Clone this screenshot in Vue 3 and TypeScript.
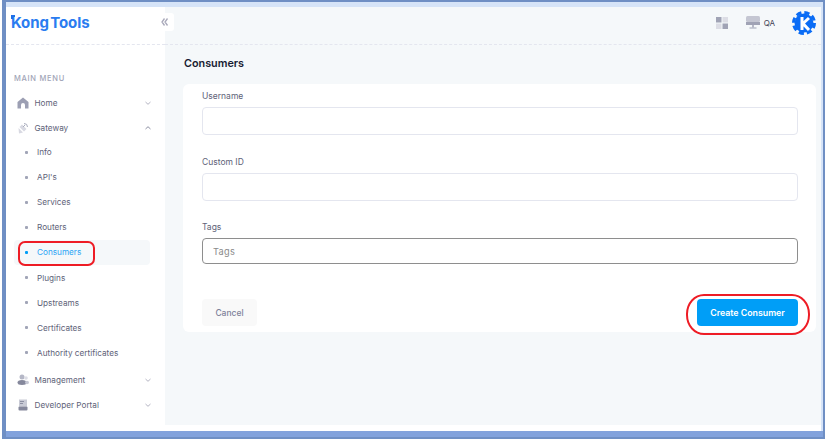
<script setup lang="ts">
const subs = ['Info', "API's", 'Services', 'Routers', 'Consumers', 'Plugins', 'Upstreams', 'Certificates', 'Authority certificates']
</script>

<template>
  <div class="frame">
    <div class="app">
      <aside class="side">
        <div class="brand">
          <span class="logo"><i class="tick"></i>Kong Tools</span>
          <button class="collapse" aria-label="Collapse">
            <svg width="8" height="10" viewBox="0 0 8 10"><path d="M3.500 1.500 1 5l2.500 3.500M6.500 1.500 4 5l2.500 3.500" fill="none" stroke="#a9a9ba" stroke-width="1.300"/></svg>
          </button>
        </div>
        <div class="menu-title">MAIN MENU</div>
        <nav class="menu">
          <div class="row top">
            <svg class="ico" width="12" height="12" viewBox="0 0 12 12"><path d="M6 .5 .5 5v6.500h3.500V8a2 2 0 0 1 4 0v3.500h3.500V5z" fill="#9c9fb3"/></svg>
            <span class="grow">Home</span>
            <svg class="chev" width="8" height="8" viewBox="0 0 8 8"><path d="M1.500 3 4 5.300 6.500 3" fill="none" stroke="#b5b5c3"/></svg>
          </div>
          <div class="row top">
            <svg class="ico" width="12" height="12" viewBox="0 0 12 12"><path d="M1.500 6 6 10.500 2 11.500zM2.500 5 5 2.500l4.500 4.500L7 9.500z" fill="#d8d9e2"/><path d="M7 1.500a3.500 3.500 0 0 1 3.500 3.500M6 5l2-2" fill="none" stroke="#a8abbc"/></svg>
            <span class="grow">Gateway</span>
            <svg class="chev" width="8" height="8" viewBox="0 0 8 8"><path d="M1.500 5 4 2.700 6.500 5" fill="none" stroke="#8d90a3"/></svg>
          </div>
          <div class="subs">
            <div v-for="s in subs" :key="s" class="sub" :class="{ active: s === 'Consumers' }">
              <i class="dot"></i><span>{{ s }}</span>
            </div>
          </div>
          <div class="row top mgmt">
            <svg class="ico" width="12" height="12" viewBox="0 0 12 12"><circle cx="5" cy="3" r="2.500" fill="#b5b7c6"/><circle cx="9" cy="4" r="1.800" fill="#dcdde5"/><ellipse cx="5" cy="8.500" rx="4.500" ry="2.500" fill="#85889c"/><ellipse cx="10" cy="8.500" rx="2" ry="1.800" fill="#c5c7d3"/></svg>
            <span class="grow">Management</span>
            <svg class="chev" width="8" height="8" viewBox="0 0 8 8"><path d="M1.500 3 4 5.300 6.500 3" fill="none" stroke="#b5b5c3"/></svg>
          </div>
          <div class="row top">
            <svg class="ico" width="12" height="12" viewBox="0 0 12 12"><rect x="2" y=".5" width="8" height="7" fill="#c9cbd6"/><rect x="3" y="2" width="4" height="1" fill="#8d90a3"/><rect x="3" y="4" width="3" height="1" fill="#8d90a3"/><rect x="1.500" y="7.500" width="9" height="4" rx="1" fill="#85889c"/></svg>
            <span class="grow">Developer Portal</span>
            <svg class="chev" width="8" height="8" viewBox="0 0 8 8"><path d="M1.500 3 4 5.300 6.500 3" fill="none" stroke="#b5b5c3"/></svg>
          </div>
        </nav>
      </aside>

      <div class="main">
        <header class="head">
          <svg width="12" height="12" viewBox="0 0 12 12"><rect width="5.500" height="5.500" fill="#a0a3b5"/><rect x="6.500" width="5.500" height="5.500" fill="#dcdde5"/><rect y="6.500" width="5.500" height="5.500" fill="#dcdde5"/><rect x="6.500" y="6.500" width="5.500" height="5.500" fill="#a0a3b5"/></svg>
          <span class="env">
            <svg width="14" height="13" viewBox="0 0 14 13"><rect width="14" height="6" rx="1.500" fill="#c4c6d2"/><rect y="6" width="14" height="3" fill="#a0a3b5"/><rect x="6" y="9" width="2" height="2.500" fill="#b5b7c6"/><rect x="3.500" y="11.500" width="7" height="1" fill="#a0a3b5"/></svg>
            <b>QA</b>
          </span>
          <svg class="kong" width="26" height="24" viewBox="0 0 26 24">
            <circle cx="13" cy="12" r="9.500" fill="#0a6cf5"/>
            <circle cx="13" cy="12" r="10.500" fill="none" stroke="#0a6cf5" stroke-width="3" stroke-dasharray="5.250 3"/>
            <path d="M11 6v13M18 7l-6 5.500 6 6.500" fill="none" stroke="#fff" stroke-width="3"/>
          </svg>
        </header>
        <main class="content">
          <h1>Consumers</h1>
          <form class="card" @submit.prevent>
            <label class="field"><span>Username</span><input type="text" /></label>
            <label class="field"><span>Custom ID</span><input type="text" /></label>
            <label class="field tags"><span>Tags</span><input type="text" placeholder="Tags" /></label>
            <div class="actions">
              <button type="button" class="cancel">Cancel</button>
              <button type="submit" class="create">Create Consumer</button>
            </div>
          </form>
        </main>
      </div>
    </div>
    <div class="mark mark-a"></div>
    <div class="mark mark-b"></div>
  </div>
</template>

<style>
html, body { margin: 0; background: #fff; }
</style>

<style scoped>
.frame {
  position: relative;
  box-sizing: border-box;
  width: 827px;
  height: 440px;
  overflow: hidden;
  padding: 7px 6px 0 6px;
  background: #fff;
  font-family: Inter, "Liberation Sans", sans-serif;
  color: #5e6278;
}
.frame::before {
  content: "";
  position: absolute;
  left: 2px; top: 0; right: 2px; bottom: 1px;
  border-style: solid;
  border-color: #6f8fc4;
  border-width: 2px 2px 2px 4px;
  background: #d6e4f8;
  box-sizing: border-box;
}
.frame::after {
  content: "";
  position: absolute;
  left: 6px; right: 4px; bottom: 3px;
  height: 6px;
  background: #82a2dc;
}
.app {
  position: relative;
  z-index: 1;
  display: flex;
  height: 424px;
  background: #fff;
}
.side {
  width: 159px;
  flex: none;
  background: #fff;
}
.brand {
  position: relative;
  height: 37px;
  border-bottom: 1px dashed #e4e6ef;
}
.logo {
  position: absolute;
  left: 5px;
  top: 7px;
  font-size: 15px;
  font-weight: 700;
  letter-spacing: -.1px;
  word-spacing: -2px;
  color: #2a7cf0;
  line-height: 18px;
}
.tick {
  position: absolute;
  left: 0; top: 1px;
  width: 4px; height: 4px;
  border-top: 2px solid #1e6fe8;
  border-left: 2px solid #1e6fe8;
  box-sizing: border-box;
}
.collapse {
  position: absolute;
  right: -9px;
  top: 6px;
  width: 18px;
  height: 18px;
  padding: 0;
  border: 0;
  border-radius: 3px;
  background: #fff;
  display: flex;
  align-items: center;
  justify-content: center;
}
.menu-title {
  margin: 28px 0 0 8px;
  font-size: 7.500px;
  font-weight: 500;
  letter-spacing: .72px;
  color: #a1a5b7;
  line-height: 12px;
}
.menu { margin-top: 5px; font-size: 8.200px; font-weight: 400; }
.row {
  height: 25px;
  display: flex;
  align-items: center;
  padding: 0 13px 0 11px;
}
.ico { flex: none; margin-right: 5.500px; }
.grow { flex: 1; }
.chev { flex: none; }
.subs { display: flex; flex-direction: column; margin-top: -.5px; }
.sub {
  height: 25.100px;
  display: flex;
  align-items: center;
  margin-left: 8px;
  margin-right: 15px;
  padding-left: 11px;
  border-radius: 4px;
}
.dot {
  width: 3px; height: 3px;
  border-radius: 1px;
  background: #a1a5b7;
  margin-right: 9px;
  flex: none;
}
.sub.active { background: #f5f8fa; color: #2ba4f5; }
.sub.active .dot { background: #009ef7; }
.mgmt { margin-top: 2.500px; }
.main {
  flex: 1;
  height: 418px;
  background: #f5f8fa;
  display: flex;
  flex-direction: column;
  min-width: 0;
}
.head {
  height: 31px;
  flex: none;
  border-bottom: 1px dashed #e4e6ef;
  display: flex;
  align-items: center;
  justify-content: flex-end;
  padding: 0 4px 6px 0;
}
.env { display: flex; align-items: center; gap: 4px; margin-left: 18px; font-size: 8px; color: #3f4254; }
.env b { font-weight: 400; }
.kong { margin-left: 16px; }
.content { padding: 0 5px 0 18px; }
h1 {
  margin: 12px 0 0;
  padding-left: 1px;
  font-size: 10.800px;
  font-weight: 600;
  line-height: 14px;
  color: #181c32;
}
.card {
  margin-top: 13px;
  height: 248px;
  box-sizing: border-box;
  background: #fff;
  border-radius: 6px;
  padding: 6px 18px 0 19px;
  display: flex;
  flex-direction: column;
}
.field { display: block; margin-bottom: 20.500px; }
.field span {
  display: block;
  font-size: 8.500px;
  font-weight: 400;
  line-height: 12px;
  margin-bottom: 5px;
  color: #5e6278;
}
.field input {
  display: block;
  box-sizing: border-box;
  width: 100%;
  height: 28px;
  padding: 0 10px;
  background: #fff;
  border: 1px solid #e4e6ef;
  border-radius: 4px;
  outline: none;
  font: 400 9.200px Inter, "Liberation Sans", sans-serif;
}
.tags input { height: 26px; border-color: #8e8e8e; letter-spacing: .3px; }
.tags input::placeholder { color: #8a8a8a; }
.actions {
  display: flex;
  justify-content: space-between;
  margin-top: 14.500px;
}
.actions button {
  height: 27px;
  border: 0;
  border-radius: 4px;
  font: 500 8.500px Inter, "Liberation Sans", sans-serif;
  padding: 0;
}
.cancel { width: 55px; background: #f9f9f9; color: #7e8299; }
.actions .create { width: 101px; background: #009ef7; color: #fff; font-size: 8.800px; font-weight: 600; }
.mark {
  position: absolute;
  z-index: 2;
  box-sizing: border-box;
  border: 2.500px solid #ee1c25;
  pointer-events: none;
}
.mark-a { left: 18px; top: 241px; width: 77px; height: 25px; border-radius: 7px; }
.mark-b { left: 686px; top: 294px; width: 124px; height: 41px; border-radius: 18px / 20px; }
</style>
